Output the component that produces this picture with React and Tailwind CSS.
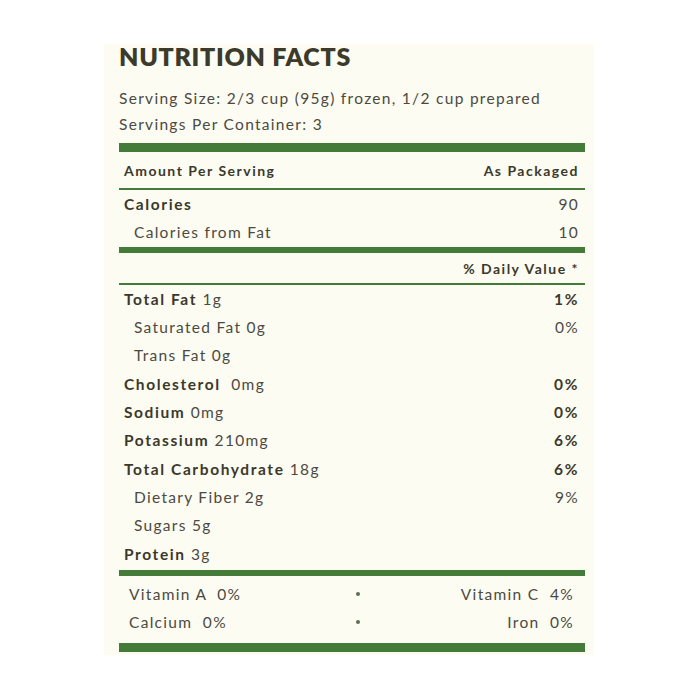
import React from "react";

const nutrients = [
  { name: "Total Fat", amount: "1g", dv: "1%", bold: true },
  { name: "Saturated Fat", amount: "0g", dv: "0%", indent: true },
  { name: "Trans Fat", amount: "0g", dv: "", indent: true },
  { name: "Cholesterol", amount: " 0mg", dv: "0%", bold: true },
  { name: "Sodium", amount: "0mg", dv: "0%", bold: true },
  { name: "Potassium", amount: "210mg", dv: "6%", bold: true },
  { name: "Total Carbohydrate", amount: "18g", dv: "6%", bold: true },
  { name: "Dietary Fiber", amount: "2g", dv: "9%", indent: true },
  { name: "Sugars", amount: "5g", dv: "", indent: true },
  { name: "Protein", amount: "3g", dv: "", bold: true },
];

const vitamins = [
  { left: "Vitamin A\u00a0\u00a00%", right: "Vitamin C\u00a0\u00a04%" },
  { left: "Calcium\u00a0\u00a00%", right: "Iron\u00a0\u00a00%" },
];

const NutrientRow = ({ item }) => (
  <div className="h-[28.35px] flex items-center justify-between pr-[6px]">
    <p className={item.indent ? "pl-[15px]" : "pl-[5px]"}>
      {item.bold ? (
        <span className="font-bold text-[#3b392c] tracking-[1.6px]">{item.name}</span>
      ) : (
        <span>{item.name}</span>
      )}
      <span className="whitespace-pre"> {item.amount}</span>
    </p>
    <p className={item.bold ? "font-bold text-[#3b392c] tracking-[1.6px]" : ""}>{item.dv}</p>
  </div>
);

const App = () => {
  return (
    <div className="w-[700px] h-[700px] bg-white pt-[44px] pl-[104px]" style={{ fontFamily: "Lato, 'Open Sans', sans-serif" }}>
      <div className="w-[490px] bg-[#fdfcf3] pl-[15px] pr-[9px] pb-[3px] text-[#4b4a42] text-[15.5px] tracking-[1.3px]">
        <h1 className="h-[24px] leading-[24px] text-[25px] font-extrabold text-[#3c3a2a] tracking-[0.7px]">NUTRITION FACTS</h1>
        <div className="mt-[17px] leading-[26px]">
          <p>Serving Size: 2/3 cup (95g) frozen, 1/2 cup prepared</p>
          <p>Servings Per Container: 3</p>
        </div>
        <div className="mt-[6px] h-[9px] bg-[#447b38]" />
        <div className="h-[36px] flex items-center justify-between pl-[5px] pr-[6px] text-[14px] font-bold text-[#3b392c] tracking-[1.5px]">
          <p>Amount Per Serving</p>
          <p>As Packaged</p>
        </div>
        <div className="h-[2px] bg-[#447b38]" />
        <div className="h-[28.5px] flex items-center justify-between pl-[5px] pr-[6px]">
          <p className="font-bold text-[#3b392c] tracking-[1.6px]">Calories</p>
          <p>90</p>
        </div>
        <div className="h-[28.5px] flex items-center justify-between pl-[15px] pr-[6px]">
          <p>Calories from Fat</p>
          <p>10</p>
        </div>
        <div className="h-[6px] bg-[#447b38]" />
        <div className="h-[30px] flex items-center justify-end pr-[6px] text-[14px] font-bold text-[#3b392c] tracking-[1.5px]">
          <p>% Daily Value *</p>
        </div>
        <div className="h-[2px] bg-[#447b38]" />
        {nutrients.map((item) => (
          <NutrientRow key={item.name} item={item} />
        ))}
        <div className="mt-[2px] h-[6px] bg-[#447b38]" />
        <div className="pt-[4px]">
          {vitamins.map((v) => (
            <div key={v.left} className="h-[28px] flex items-center pl-[10px] pr-[11px]">
              <p className="w-[224px]">{v.left}</p>
              <div className="w-[10px] flex justify-center">
                <span className="w-[4px] h-[4px] rounded-full bg-[#5c6e55]" />
              </div>
              <p className="flex-1 text-right">{v.right}</p>
            </div>
          ))}
        </div>
        <div className="mt-[7px] h-[9px] bg-[#447b38]" />
      </div>
    </div>
  );
};

export default App;
